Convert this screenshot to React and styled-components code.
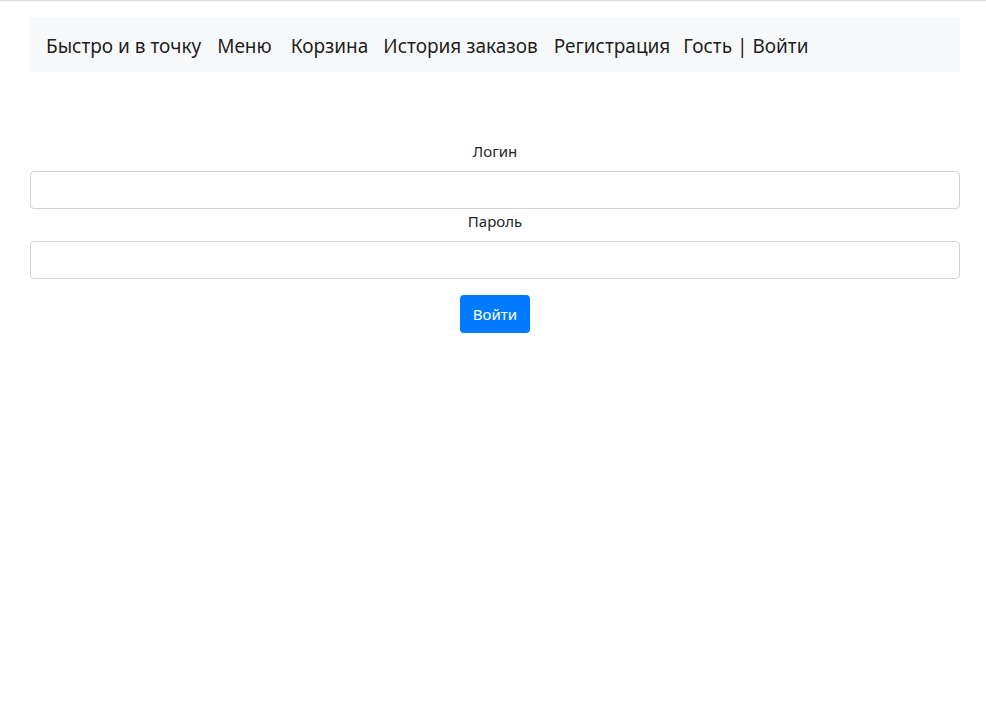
import React from 'react';
import styled, { createGlobalStyle } from 'styled-components';

const GlobalStyle = createGlobalStyle`
    html, body {
        margin: 0;
        padding: 0;
        background: #fff;
    }
    body {
        border-top: 1px solid #dadada;
        font-family: "Noto Sans", "Open Sans", sans-serif;
        color: #212529;
    }
`;

const Page = styled.div`
    padding: 16px 26px 0 30px;
`;

const Navbar = styled.nav`
    display: flex;
    align-items: center;
    background: #f8f9fa;
    padding: 10px 16px 8px;
    height: 55px;
    box-sizing: border-box;
`;

const NavLink = styled.a`
    font-size: 19px;
    line-height: 28px;
    color: rgba(0, 0, 0, 0.9);
    text-decoration: none;
    margin-right: ${props => props.$gap}px;
    white-space: nowrap;
`;

const Form = styled.form`
    display: flex;
    flex-direction: column;
    align-items: center;
    margin-top: 67px;
`;

const Label = styled.label`
    font-size: 15px;
    line-height: 24px;
    margin-bottom: 8px;
`;

const Input = styled.input`
    width: 100%;
    height: 38px;
    box-sizing: border-box;
    border: 1px solid #ced4da;
    border-radius: 4px;
    background: #fff;
    margin-bottom: ${props => props.$mb}px;
`;

const Button = styled.button`
    width: 70px;
    height: 38px;
    border: none;
    border-radius: 4px;
    background: #007bff;
    color: #fff;
    font-family: inherit;
    font-size: 15px;
`;

const links = [
    ['Быстро и в точку', 16],
    ['Меню', 19],
    ['Корзина', 15],
    ['История заказов', 16],
    ['Регистрация', 13],
    ['Гость | Войти', 0],
];

export default function App() {
    return (
        <>
            <GlobalStyle />
            <Page>
                <Navbar>
                    {links.map(([text, gap]) => (
                        <NavLink key={text} href="#" $gap={gap}>{text}</NavLink>
                    ))}
                </Navbar>
                <Form onSubmit={e => e.preventDefault()}>
                    <Label>Логин</Label>
                    <Input type="text" $mb={0} />
                    <Label>Пароль</Label>
                    <Input type="password" $mb={16} />
                    <Button type="submit">Войти</Button>
                </Form>
            </Page>
        </>
    );
}
